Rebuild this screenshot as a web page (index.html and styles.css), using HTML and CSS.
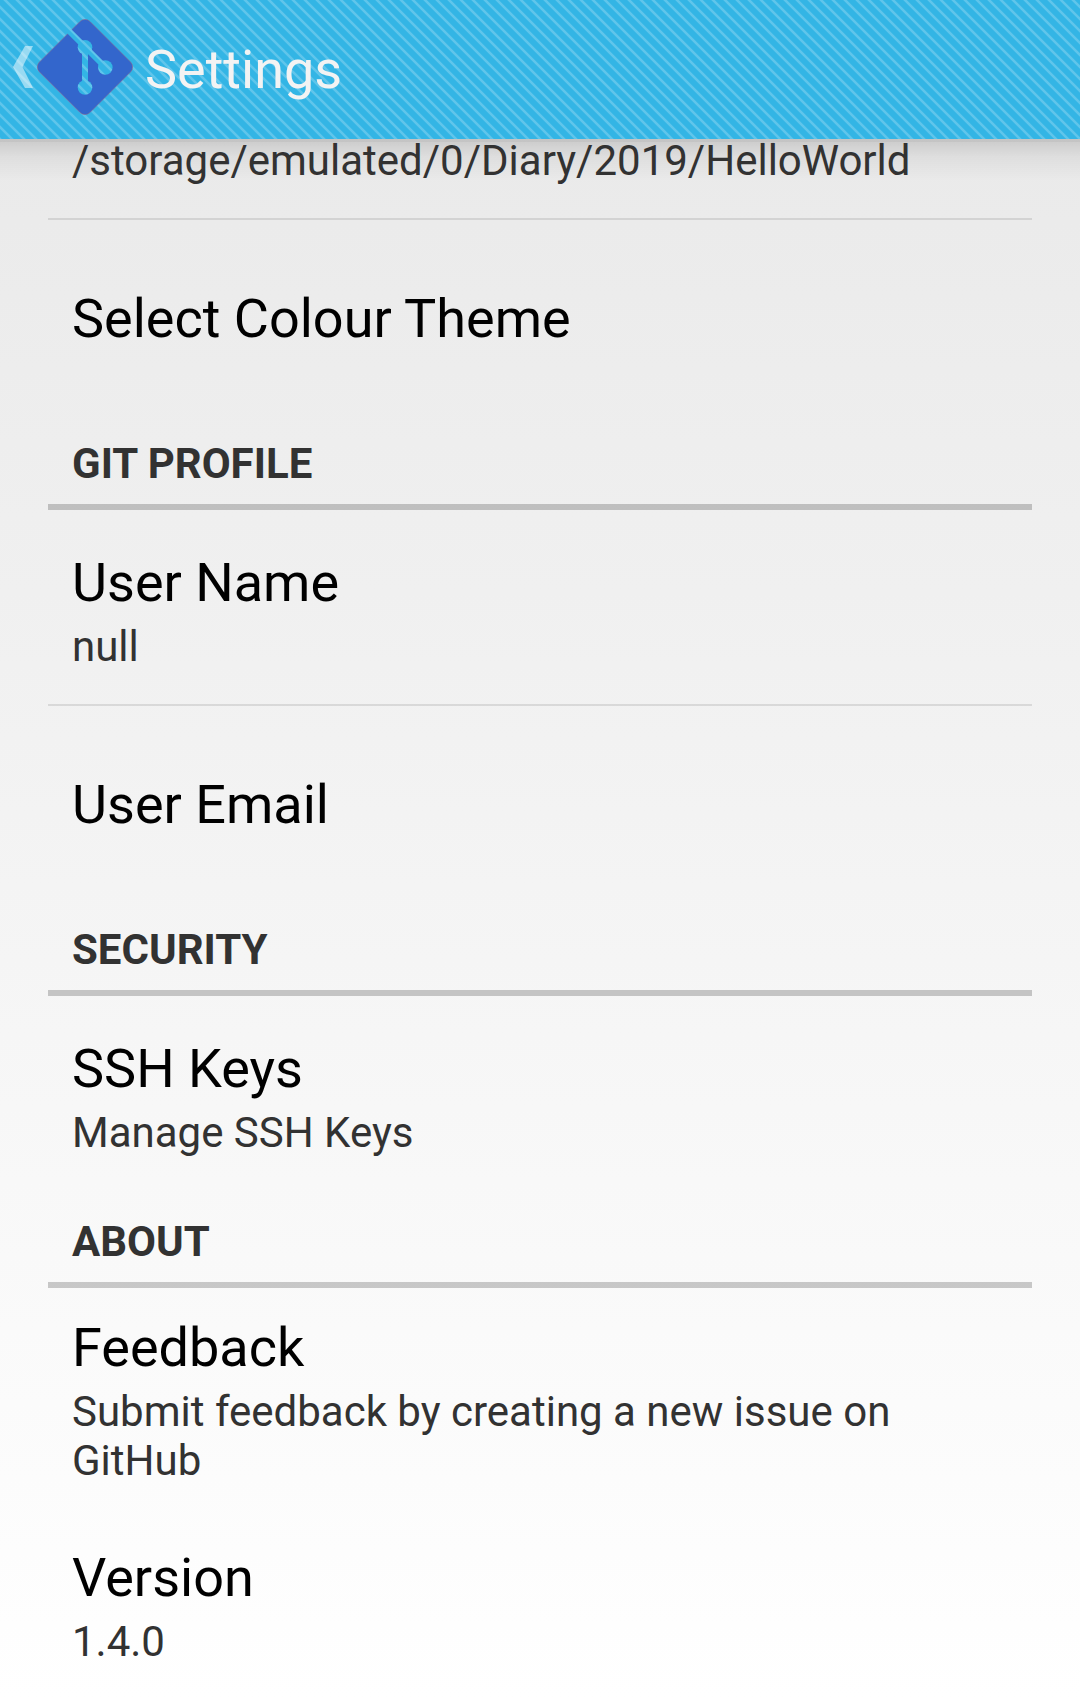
FILE: index.html
```html
<!DOCTYPE html>
<html lang="en">
<head>
<meta charset="utf-8">
<title>Settings</title>
<link rel="stylesheet" href="styles.css">
</head>
<body>
<header class="action-bar">
  <svg class="up" viewBox="0 0 20 42" width="20" height="42"><path d="M12 0h8L9.500 21 20 42h-8L0 21z" fill="#fff" fill-opacity=".5"/></svg>
  <svg class="logo" viewBox="0 0 96 96" width="96" height="96">
    <defs>
      <mask id="branches" maskUnits="userSpaceOnUse" x="0" y="0" width="96" height="96">
        <rect width="96" height="96" fill="#fff"/>
        <path d="M25 5L68 48M48 28v40" fill="none" stroke="#000" stroke-width="6"/>
        <circle cx="48" cy="28.300" r="7.300"/><circle cx="68.300" cy="48.500" r="7.300"/><circle cx="48" cy="68.500" r="7.300"/>
      </mask>
    </defs>
    <g mask="url(#branches)">
      <rect x="12.300" y="12.300" width="71.400" height="71.400" rx="7" transform="rotate(45 48 48)" fill="#3366cc" stroke="#8a6590" stroke-width=".6"/>
    </g>
  </svg>
  <h1 class="title">Settings</h1>
</header>
<main class="list">
  <div class="item item-scrolled"><div class="summary">/storage/emulated/0/Diary/2019/HelloWorld</div></div>
  <div class="item item-single"><div class="name">Select Colour Theme</div></div>
  <h2 class="category">GIT PROFILE</h2>
  <div class="item divided"><div class="name">User Name</div><div class="summary">null</div></div>
  <div class="item item-single"><div class="name">User Email</div></div>
  <h2 class="category">SECURITY</h2>
  <div class="item"><div class="name">SSH Keys</div><div class="summary">Manage SSH Keys</div></div>
  <h2 class="category">ABOUT</h2>
  <div class="item item-compact"><div class="name">Feedback</div><div class="summary">Submit feedback by creating a new issue on GitHub</div></div>
  <div class="item"><div class="name">Version</div><div class="summary">1.4.0</div></div>
</main>
</body>
</html>
```
FILE: styles.css
```css
* { box-sizing: border-box; }
body {
  margin: 0;
  height: 1699px;
  overflow: hidden;
  font-family: Roboto, sans-serif;
  color: #000;
  background: linear-gradient(#e8e8e8, #fff);
}
.action-bar {
  display: flex;
  align-items: flex-start;
  height: 139px;
  padding-left: 13px;
  background: #33b5e5 repeating-linear-gradient(45deg, rgba(255,255,255,.22) 0 .7px, rgba(255,255,255,0) 1.700px 6.785px, rgba(255,255,255,.22) 7.785px 8.485px);
}
.up { margin-top: 46px; }
.logo { margin: 19px 0 0 4px; }
.title {
  margin: 34px 0 0 12px;
  font-size: 54px;
  font-weight: 400;
  line-height: 71px;
  color: #f3f3f3;
}
.list {
  display: flow-root;
  height: 1560px;
  padding: 0 48px;
  background: linear-gradient(rgba(0,0,0,.16) 3px, rgba(0,0,0,.12) 3px, rgba(0,0,0,.05) 18px, transparent 42px);
}
.item { height: 194px; padding: 37px 24px 0; }
.item-scrolled { display: flow-root; height: 81px; padding-top: 0; border-bottom: 2px solid rgba(0,0,0,.1); }
.item-scrolled .summary { margin-top: -3px; }
.item-single { height: 192px; padding-top: 63px; }
.divided { height: 196px; border-bottom: 2px solid rgba(0,0,0,.1); }
.item-compact { height: 217px; padding-top: 24px; }
.name { font-size: 54px; line-height: 71px; }
.summary { margin-top: 4px; font-size: 42px; line-height: 49px; color: #323232; }
.category {
  height: 98px;
  margin: 0;
  padding: 27px 24px 0;
  font-size: 42px;
  line-height: 49px;
  font-weight: 700;
  color: #323232;
  border-bottom: 6px solid rgba(0,0,0,.2);
}
```
